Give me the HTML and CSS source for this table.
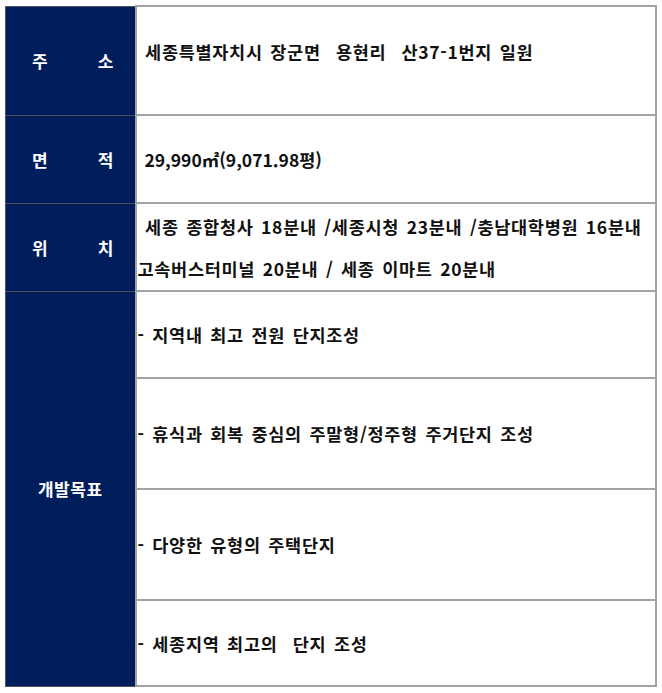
FILE: index.html
```html
<!DOCTYPE html>
<html lang="ko">
<head>
<meta charset="utf-8">
<title>개발개요</title>
<link rel="stylesheet" href="styles.css">
</head>
<body>
<table class="info">
  <tr class="r1">
    <th class="label spread">주 소</th>
    <td class="value lift">&nbsp;세종특별자치시 장군면&nbsp;&nbsp;용현리&nbsp;&nbsp;산37-1번지 일원</td>
  </tr>
  <tr class="r2">
    <th class="label spread">면 적</th>
    <td class="value tight">&nbsp;29,990㎡(9,071.98평)</td>
  </tr>
  <tr class="r3">
    <th class="label spread">위 치</th>
    <td class="value multi">&nbsp;세종 종합청사 18분내 /세종시청 23분내 /충남대학병원 16분내<br>고속버스터미널 20분내 / 세종 이마트 20분내</td>
  </tr>
  <tr class="r4">
    <th class="label center" rowspan="4">개발목표</th>
    <td class="value">- 지역내 최고 전원 단지조성</td>
  </tr>
  <tr class="r5">
    <td class="value">- 휴식과 회복 중심의 주말형/정주형 주거단지 조성</td>
  </tr>
  <tr class="r6">
    <td class="value">- 다양한 유형의 주택단지</td>
  </tr>
  <tr class="r7">
    <td class="value">- 세종지역 최고의&nbsp;&nbsp;단지 조성</td>
  </tr>
</table>
</body>
</html>
```
FILE: styles.css
```css
html, body {
  margin: 0;
  padding: 0;
  background: #ffffff;
}
body {
  padding: 5px;
  font-family: "Noto Sans CJK KR", "Noto Sans", sans-serif;
}
.info {
  border-collapse: collapse;
  width: 652px;
  table-layout: fixed;
}
.label {
  width: 130px;
  background: #001e5b;
  color: #ffffff;
  font-size: 17px;
  font-weight: 700;
  border: 1px solid #4d5160;
  padding: 0 21px 0 26px;
  box-sizing: border-box;
}
.spread {
  text-align: justify;
  text-align-last: justify;
}
.center {
  text-align: center;
  padding: 0;
  letter-spacing: 0.5px;
}
.value {
  border: 2px solid #a3a3a3;
  color: #111111;
  font-size: 17.5px;
  letter-spacing: 0.7px;
  word-spacing: 2px;
  font-weight: 700;
  padding: 0 0 0 1px;
  vertical-align: middle;
  white-space: nowrap;
}
.tight {
  letter-spacing: 0;
}
.lift {
  padding-bottom: 18px;
}
.multi {
  line-height: 42px;
  padding-top: 2px;
}
.r1 { height: 109px; }
.r2 { height: 88px; }
.r3 { height: 86px; }
.r4 { height: 87px; }
.r5 { height: 111px; }
.r6 { height: 111px; }
.r7 { height: 86px; }
```
